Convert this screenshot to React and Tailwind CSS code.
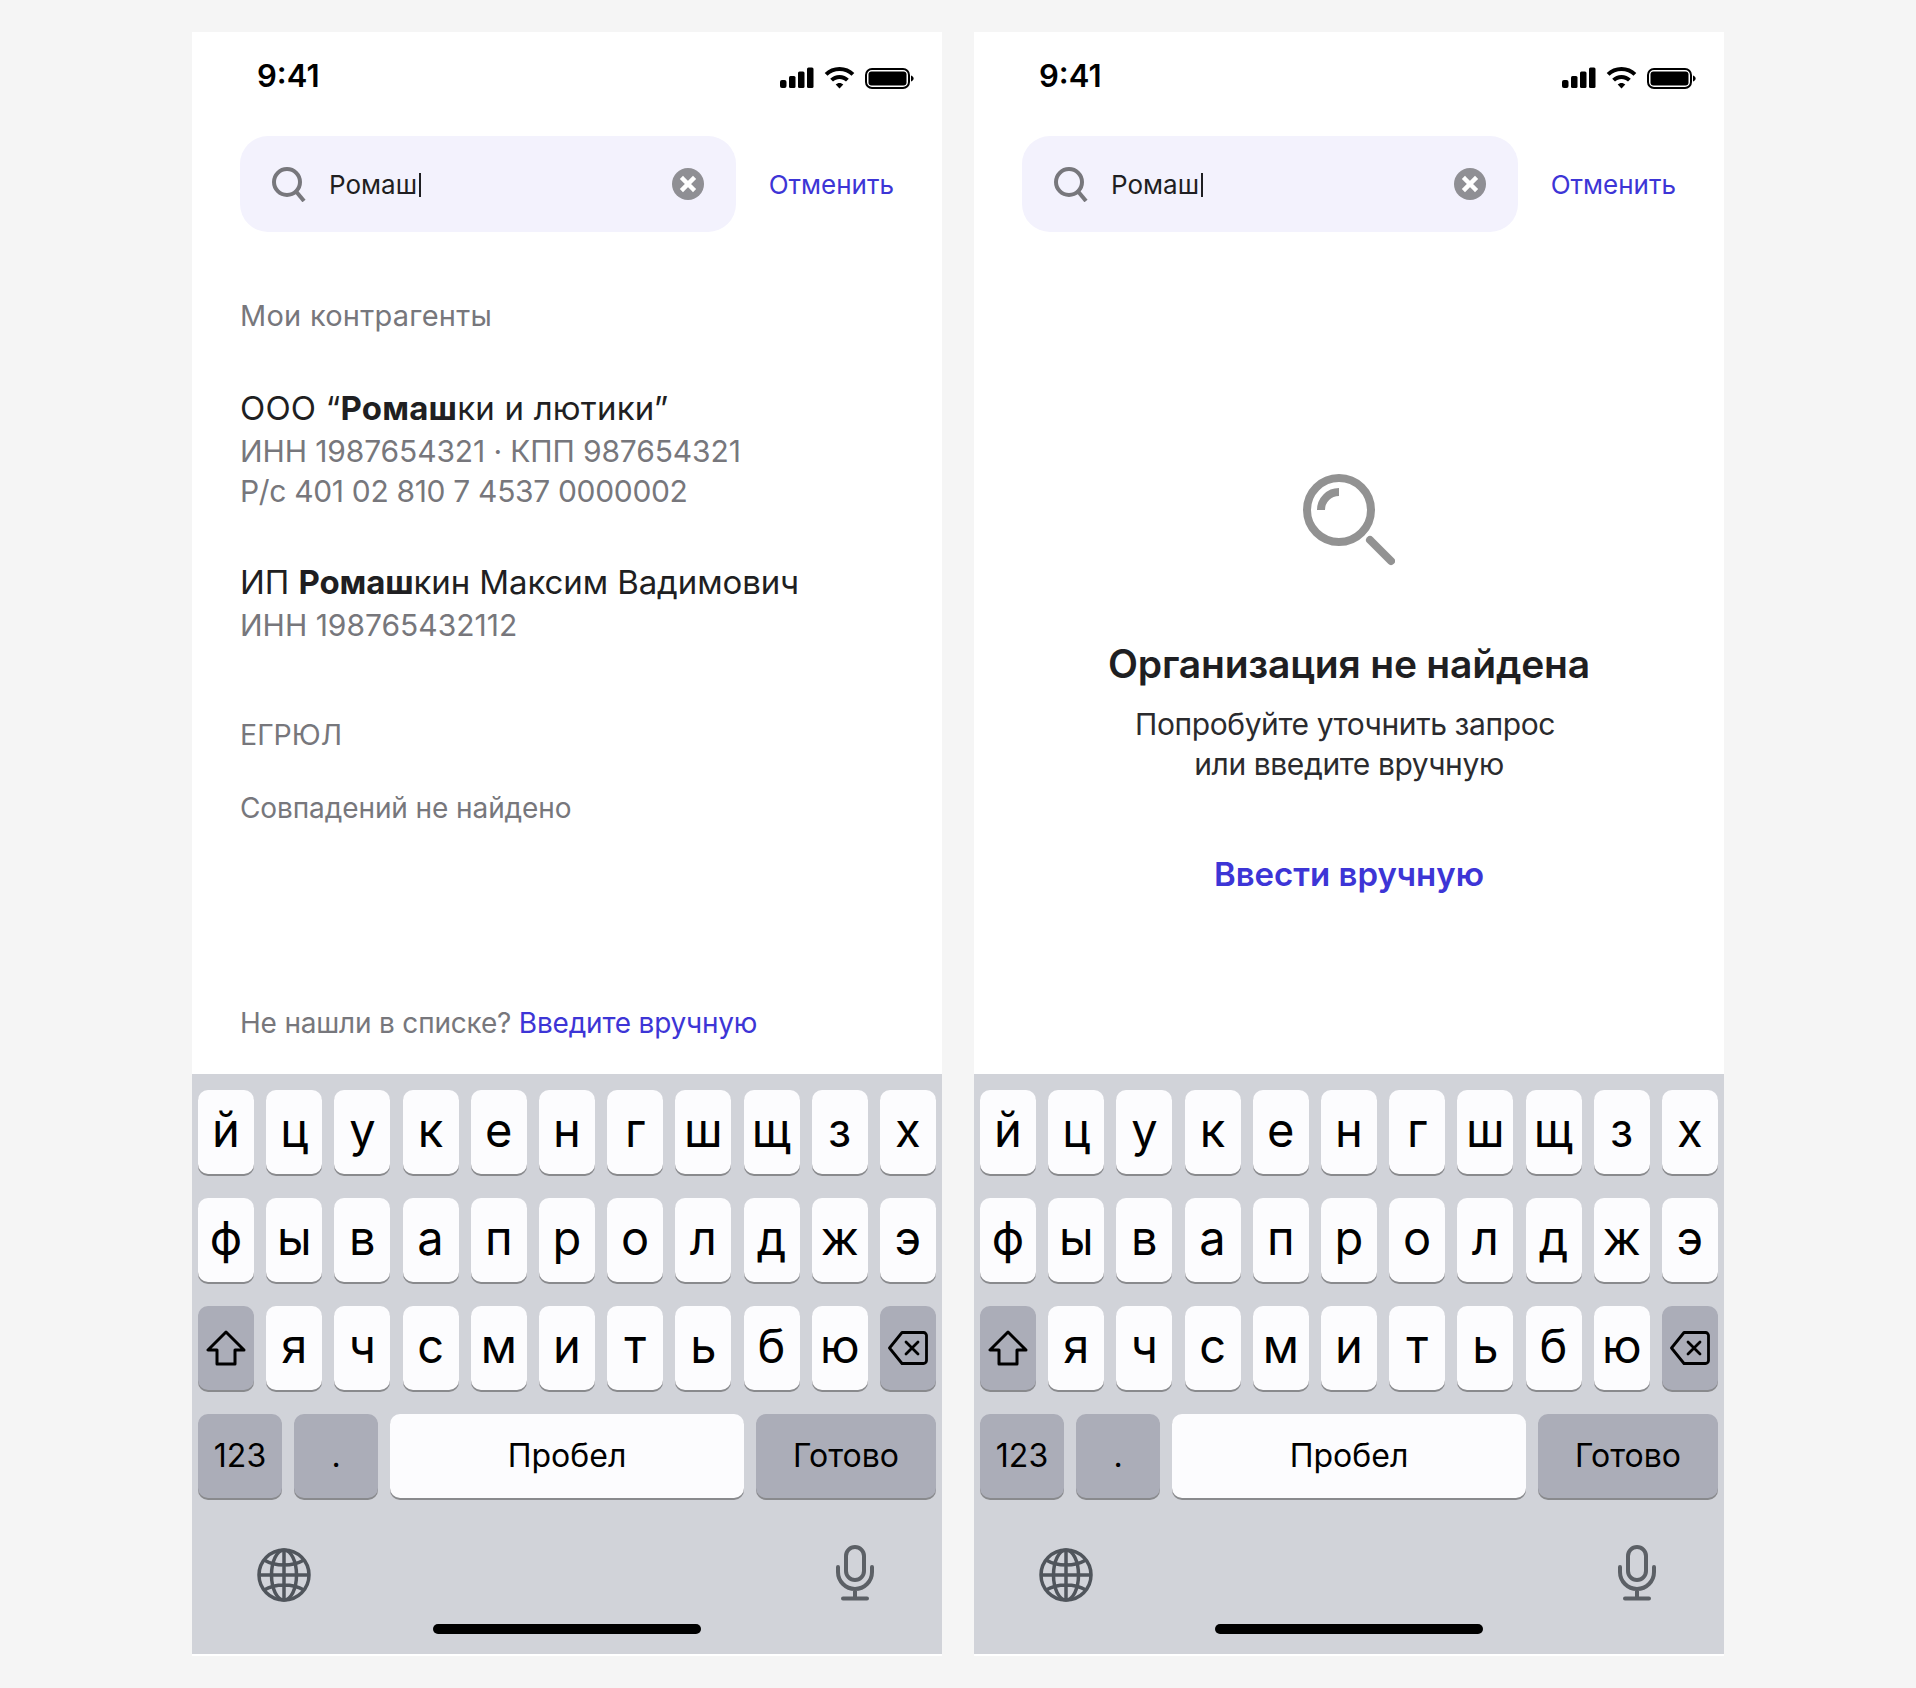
const sans = "font-['Inter','Noto_Sans',sans-serif]";

const rows = [
  ["й", "ц", "у", "к", "е", "н", "г", "ш", "щ", "з", "х"],
  ["ф", "ы", "в", "а", "п", "р", "о", "л", "д", "ж", "э"],
];
const row3 = ["я", "ч", "с", "м", "и", "т", "ь", "б", "ю"];

function StatusBar() {
  return (
    <div className="h-[88px] flex items-start justify-between pl-[65px] pr-[28px] shrink-0">
      <span className="mt-[26px] text-[31px] leading-[36px] font-semibold text-black">9:41</span>
      <svg width="134" height="26" viewBox="0 0 134 26" className="mt-[34px]">
        <rect x="0" y="14" width="6.500" height="8" rx="2" />
        <rect x="9" y="10" width="6.500" height="12" rx="1.500" />
        <rect x="18" y="5.500" width="6.500" height="16.500" rx="1.500" />
        <rect x="27" y="1.500" width="6.500" height="20.500" rx="1.500" />
        <path d="M59.500 1c5.800 0 11 2.200 14.800 5.900l-2.800 2.900c-3.100-3-7.300-4.800-12-4.800s-8.900 1.800-12 4.800l-2.800-2.900C48.500 3.200 53.700 1 59.500 1z" />
        <path d="M59.500 9c3.600 0 6.900 1.400 9.300 3.700L66 15.600c-1.700-1.600-4-2.600-6.500-2.600s-4.800 1-6.500 2.600l-2.800-2.900c2.400-2.300 5.700-3.700 9.300-3.700z" />
        <path d="M59.500 17c1.500 0 2.800.6 3.800 1.500l-3.800 4-3.800-4c1-.9 2.300-1.500 3.800-1.500z" />
        <rect x="86" y="3" width="43" height="19" rx="6" fill="none" stroke="#000" strokeWidth="2" />
        <rect x="88.500" y="5.500" width="38" height="14" rx="3" />
        <path d="M131 9.500c1.600.5 2.600 1.600 2.600 3s-1 2.500-2.600 3z" />
      </svg>
    </div>
  );
}

function SearchBar() {
  return (
    <div className="flex items-center pl-[48px] pr-[48px] mt-[16px] shrink-0">
      <div className="w-[496px] h-[96px] rounded-[28px] bg-[#f3f2fd] flex items-center pl-[32px] pr-[32px]">
        <svg width="34" height="36" viewBox="0 0 34 36" fill="none" stroke="#77777c" strokeWidth="4">
          <circle cx="15" cy="16" r="13" />
          <path d="M24.500 26L32 35" />
        </svg>
        <span className="ml-[23px] pt-[2px] text-[26px] leading-[32px] text-[#1f1f22]">Ромаш</span>
        <span className="w-[2px] h-[24px] bg-[#1f1f22] ml-[2px] mt-[2px]" />
        <svg width="32" height="32" viewBox="0 0 32 32" className="ml-auto">
          <circle cx="16" cy="16" r="16" fill="#8f8f94" />
          <path d="M11 11l10 10M21 11L11 21" stroke="#fff" strokeWidth="4.500" strokeLinecap="square" />
        </svg>
      </div>
      <span className="ml-auto pt-[2px] text-[26px] leading-[32px] text-[#3d35d6]">Отменить</span>
    </div>
  );
}

function Letter({ ch }) {
  return (
    <div className="w-[56px] h-[84px] rounded-[10px] bg-[#fcfcfe] shadow-[0_2px_0_#898a8d] flex items-center justify-center text-[47px] leading-none text-black pb-[6px]">
      {ch}
    </div>
  );
}

function Keyboard() {
  return (
    <div className="mt-auto h-[580px] mb-[2px] shrink-0 bg-[#d1d3d9] relative px-[6px] pt-[16px] flex flex-col">
      {rows.map((row) => (
        <div key={row[0]} className="flex justify-between mb-[24px]">
          {row.map((ch) => (
            <Letter key={ch} ch={ch} />
          ))}
        </div>
      ))}
      <div className="flex justify-between mb-[24px]">
        <div className="w-[56px] h-[84px] rounded-[10px] bg-[#abadb8] shadow-[0_2px_0_#898a8d] flex items-center justify-center">
          <svg width="40" height="36" viewBox="0 0 40 36" fill="none" stroke="#000" strokeWidth="3" strokeLinejoin="round">
            <path d="M20 2L2 20h9v14h18V20h9z" />
          </svg>
        </div>
        {row3.map((ch) => (
          <Letter key={ch} ch={ch} />
        ))}
        <div className="w-[56px] h-[84px] rounded-[10px] bg-[#abadb8] shadow-[0_2px_0_#898a8d] flex items-center justify-center">
          <svg width="40" height="34" viewBox="0 0 40 34" fill="none" stroke="#000" strokeWidth="2.800" strokeLinejoin="round" strokeLinecap="round">
            <path d="M14 1.500h21.500a3 3 0 0 1 3 3v25a3 3 0 0 1-3 3H14L1.500 17z" />
            <path d="M18 11l12 12M30 11L18 23" />
          </svg>
        </div>
      </div>
      <div className="flex justify-between text-[32px] text-black">
        <div className="w-[84px] h-[84px] rounded-[10px] bg-[#abadb8] shadow-[0_2px_0_#898a8d] flex items-center justify-center">123</div>
        <div className="w-[84px] h-[84px] rounded-[10px] bg-[#abadb8] shadow-[0_2px_0_#898a8d] flex items-center justify-center">.</div>
        <div className="w-[354px] h-[84px] rounded-[10px] bg-[#fcfcfe] shadow-[0_2px_0_#898a8d] flex items-center justify-center">Пробел</div>
        <div className="w-[180px] h-[84px] rounded-[10px] bg-[#abadb8] shadow-[0_2px_0_#898a8d] flex items-center justify-center">Готово</div>
      </div>
      <div className="flex items-start justify-between pl-[59px] pr-[62px] mt-[50px]">
        <svg width="54" height="54" viewBox="0 0 54 54" fill="none" stroke="#50555c" strokeWidth="3.500">
          <circle cx="27" cy="27" r="25" />
          <ellipse cx="27" cy="27" rx="12.500" ry="25" />
          <path d="M27 2v50M2 27h50M7 12c6 3.500 12 5 20 5s14-1.500 20-5M7 42c6-3.500 12-5 20-5s14 1.500 20 5" />
        </svg>
        <svg width="38" height="56" viewBox="0 0 38 56" fill="none" stroke="#5c6066" strokeWidth="4" strokeLinecap="round" className="mt-[-3px]">
          <rect x="10" y="2" width="18" height="33" rx="9" />
          <path d="M2 22v5a17 17 0 0 0 34 0v-5M19 44v9M7 53.500h24" />
        </svg>
      </div>
      <div className="absolute left-1/2 -translate-x-1/2 bottom-[20px] w-[268px] h-[10px] rounded-full bg-black" />
    </div>
  );
}

function Company({ name, nameTracking, lines }) {
  return (
    <div className="mb-[49px]">
      <div className={`text-[33px] leading-[45px] text-[#1f1f22] ${nameTracking}`}>{name}</div>
      {lines.map(([line, tracking]) => (
        <div key={line} className={`text-[30px] leading-[40px] text-[#77777c] ${tracking}`}>
          {line}
        </div>
      ))}
    </div>
  );
}

function ResultsPhone() {
  return (
    <div className="w-[750px] h-[1624px] bg-white flex flex-col">
      <StatusBar />
      <SearchBar />
      <div className="px-[48px] pt-[66px] flex flex-col flex-1">
        <div className="text-[29px] tracking-[0.25px] leading-[36px] text-[#77777c] mb-[52px]">Мои контрагенты</div>
        <Company
          name={<>ООО “<b className="font-bold">Ромаш</b>ки и лютики”</>}
          nameTracking="tracking-[0.2px]"
          lines={[
            ["ИНН 1987654321 · КПП 987654321", "tracking-[-0.12px]"],
            ["Р/с 401 02 810 7 4537 0000002", "tracking-[-0.33px]"],
          ]}
        />
        <Company
          name={<>ИП <b className="font-bold">Ромаш</b>кин Максим Вадимович</>}
          nameTracking="tracking-[-0.1px]"
          lines={[["ИНН 198765432112", "tracking-normal"]]}
        />
        <div className="text-[28.5px] leading-[36px] text-[#77777c] mt-[23px]">ЕГРЮЛ</div>
        <div className="text-[28px] tracking-[-0.1px] leading-[32px] text-[#77777c] mt-[39px]">Совпадений не найдено</div>
        <div className="mt-auto mb-[35px] text-[28px] tracking-[-0.2px] leading-[32px] text-[#77777c]">
          Не нашли в списке? <span className="text-[#3d35d6]">Введите вручную</span>
        </div>
      </div>
      <Keyboard />
    </div>
  );
}

function EmptyPhone() {
  return (
    <div className="w-[750px] h-[1624px] bg-white flex flex-col">
      <StatusBar />
      <SearchBar />
      <div className="flex flex-col items-center flex-1 pt-[242px]">
        <svg width="92" height="94" viewBox="0 0 92 94" fill="none" stroke="#929292" strokeWidth="8">
          <circle cx="36" cy="36" r="32" />
          <path d="M18 36a18 18 0 0 1 18-18" />
          <path d="M67 66l21 21" strokeLinecap="round" />
        </svg>
        <div className="mt-[72px] text-[39px] tracking-[-0.2px] leading-[48px] font-semibold text-[#1f1f22]">Организация не найдена</div>
        <div className="mt-[16px] text-[30px] tracking-[-0.4px] leading-[40px] text-[#2b2b2e] text-center">
          <span className="pr-[8px]">Попробуйте уточнить запрос</span>
          <br />
          или введите вручную
        </div>
        <div className="mt-[68px] text-[33px] leading-[44px] font-semibold text-[#3d35d6]">Ввести вручную</div>
      </div>
      <Keyboard />
    </div>
  );
}

export default function App() {
  return (
    <div className={`${sans} w-[1916px] h-[1688px] bg-[#f5f5f5] flex justify-center gap-[32px] pt-[32px]`}>
      <ResultsPhone />
      <EmptyPhone />
    </div>
  );
}
